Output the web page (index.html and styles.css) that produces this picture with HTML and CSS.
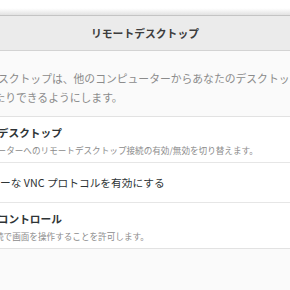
FILE: index.html
```html
<!DOCTYPE html>
<html lang="ja">
<head>
<meta charset="utf-8">
<link rel="stylesheet" href="styles.css">
</head>
<body>
<div class="top"></div>
<div class="dialog">
  <header class="headerbar"><span class="title">リモートデスクトップ</span></header>
  <main class="content">
    <div class="desc">
      <div class="desc-line l1">リモートデスクトップは、他のコンピューターからあなたのデスクトップを表示し</div>
      <div class="desc-line l2">操作したりできるようにします。</div>
    </div>
    <div class="listbox">
      <div class="row">
        <div class="row-title t1">リモートデスクトップ</div>
        <div class="row-sub s1">このコンピューターへのリモートデスクトップ接続の有効/無効を切り替えます。</div>
      </div>
      <div class="row single">
        <div class="row-label t2">レガシーな VNC プロトコルを有効にする</div>
      </div>
      <div class="row last">
        <div class="row-title t1">リモートコントロール</div>
        <div class="row-sub s3">リモート接続で画面を操作することを許可します。</div>
      </div>
    </div>
  </main>
</div>
</body>
</html>
```
FILE: styles.css
```css
html, body {
  margin: 0;
  padding: 0;
  width: 290px;
  height: 290px;
  overflow: hidden;
  background: #fafafa;
  font-family: "Noto Sans CJK JP", "Noto Sans", sans-serif;
}
.top {
  height: 15px;
  background: linear-gradient(#ffffff 0%, #ffffff 55%, #e2e2e2 100%);
}
.dialog {
  overflow: hidden;
  height: 275px;
}
.headerbar {
  height: 34px;
  background: #ebebeb;
  border-top: 1px solid #c4c4c4;
  border-bottom: 1px solid #d3d3d3;
  display: flex;
  align-items: center;
  justify-content: center;
}
.title {
  font-size: 10.8px;
  font-weight: bold;
  color: #3d3d3d;
  line-height: 16px;
}
.content {
  background: #fafafa;
  padding-top: 18px;
  height: 221px;
  overflow: hidden;
}
.desc {
  font-size: 10.8px;
  color: #8b8b8b;
  line-height: 19px;
}
.desc-line {
  white-space: nowrap;
}
.l1 { margin-left: -56px; }
.l2 { margin-left: -38px; }
.listbox {
  margin-top: 9px;
  background: #ffffff;
  border-top: 1px solid #e2e2e2;
  border-bottom: 1px solid #e2e2e2;
}
.row {
  height: 46px;
  box-sizing: border-box;
  padding-top: 8px;
  border-bottom: 1px solid #e6e6e6;
  display: flex;
  flex-direction: column;
  gap: 2px;
  white-space: nowrap;
}
.row.last {
  height: 45px;
  border-bottom: none;
}
.row.single {
  height: 40px;
  padding-top: 0;
  justify-content: center;
}
.row-title {
  font-size: 10.7px;
  font-weight: bold;
  color: #2e3436;
  line-height: 16px;
}
.row-label {
  font-size: 10.7px;
  color: #2e3436;
  line-height: 16px;
}
.row-sub {
  font-size: 8.6px;
  color: #8b8b8b;
  line-height: 14px;
}
.t1 { margin-left: -45px; }
.t2 { margin-left: -32px; }
.s1 { margin-left: -54px; }
.s3 { margin-left: -48px; }
```
